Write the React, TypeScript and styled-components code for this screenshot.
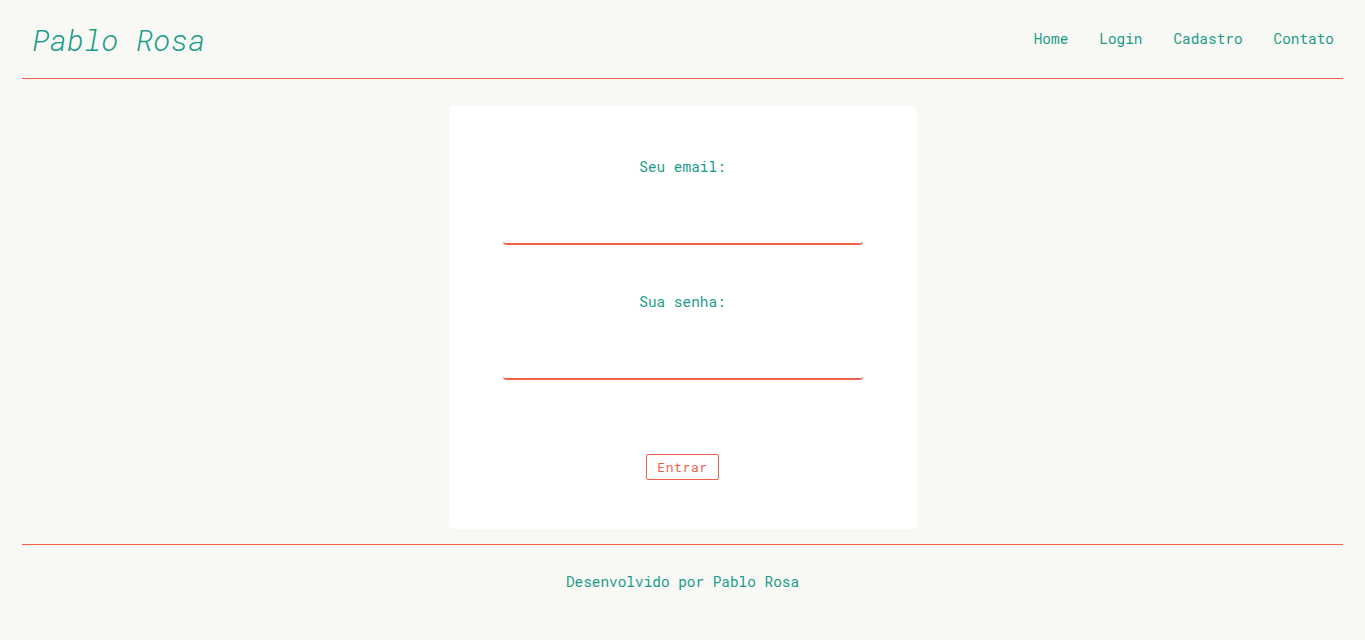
import React from "react";
import styled, { createGlobalStyle } from "styled-components";

const teal = "#1a9c88";
const coral = "#f0604a";
const mono = `"Roboto Mono", "Liberation Mono", "DejaVu Sans Mono", monospace`;

const GlobalStyle = createGlobalStyle`
  * { box-sizing: border-box; }
  body {
    margin: 0;
    background-color: #f8f8f4;
    font-family: ${mono};
    color: ${teal};
  }
`;

const Header = styled.header`
  display: flex;
  align-items: center;
  justify-content: space-between;
  height: 78px;
  padding: 0 31px 0 32px;
`;

const Logo = styled.h1`
  margin: 0;
  font-size: 29.5px;
  font-style: italic;
  font-weight: 300;
  color: ${teal};
`;

const Nav = styled.nav`
  display: flex;
  gap: 31px;
  padding-bottom: 2px;
`;

const NavLink = styled.a`
  font-size: 14.4px;
  color: ${teal};
  text-decoration: none;
  cursor: pointer;
`;

const Rule = styled.hr`
  border: none;
  border-top: 1px solid ${coral};
  margin: 0 22px;
`;

const Main = styled.main`
  display: flex;
  justify-content: center;
  padding: 27px 0 15px;
`;

const Card = styled.div`
  width: 468px;
  height: 423px;
  background: #fff;
  border-radius: 5px;
  padding-top: 51px;
`;

const Form = styled.form`
  display: flex;
  flex-direction: column;
  align-items: center;
`;

const Label = styled.label<{ $top?: number }>`
  display: block;
  font-size: 14.4px;
  line-height: 20px;
  margin-top: ${(p) => p.$top ?? 0}px;
`;

const Input = styled.input`
  width: 360px;
  height: 40px;
  margin-top: 28px;
  border: none;
  border-bottom: 2px solid ${coral};
  border-radius: 4px;
  background: transparent;
  outline: none;
  font-family: ${mono};
`;

const Button = styled.button`
  margin-top: 74px;
  height: 26px;
  padding: 0 10px;
  background: transparent;
  border: 1px solid ${coral};
  border-radius: 2px;
  color: ${coral};
  font-family: ${mono};
  font-size: 13px;
  letter-spacing: 0.6px;
  cursor: pointer;
`;

const Footer = styled.footer`
  text-align: center;
  font-size: 14.4px;
  padding-top: 27px;
`;

export default function App() {
  return (
    <>
      <GlobalStyle />
      <Header>
        <Logo>Pablo Rosa</Logo>
        <Nav>
          <NavLink>Home</NavLink>
          <NavLink>Login</NavLink>
          <NavLink>Cadastro</NavLink>
          <NavLink>Contato</NavLink>
        </Nav>
      </Header>
      <Rule />
      <Main>
        <Card>
          <Form onSubmit={(e) => e.preventDefault()}>
            <Label htmlFor="email">Seu email:</Label>
            <Input id="email" type="email" />
            <Label htmlFor="senha" $top={47}>Sua senha:</Label>
            <Input id="senha" type="password" />
            <Button type="submit">Entrar</Button>
          </Form>
        </Card>
      </Main>
      <Rule />
      <Footer>Desenvolvido por Pablo Rosa</Footer>
    </>
  );
}
